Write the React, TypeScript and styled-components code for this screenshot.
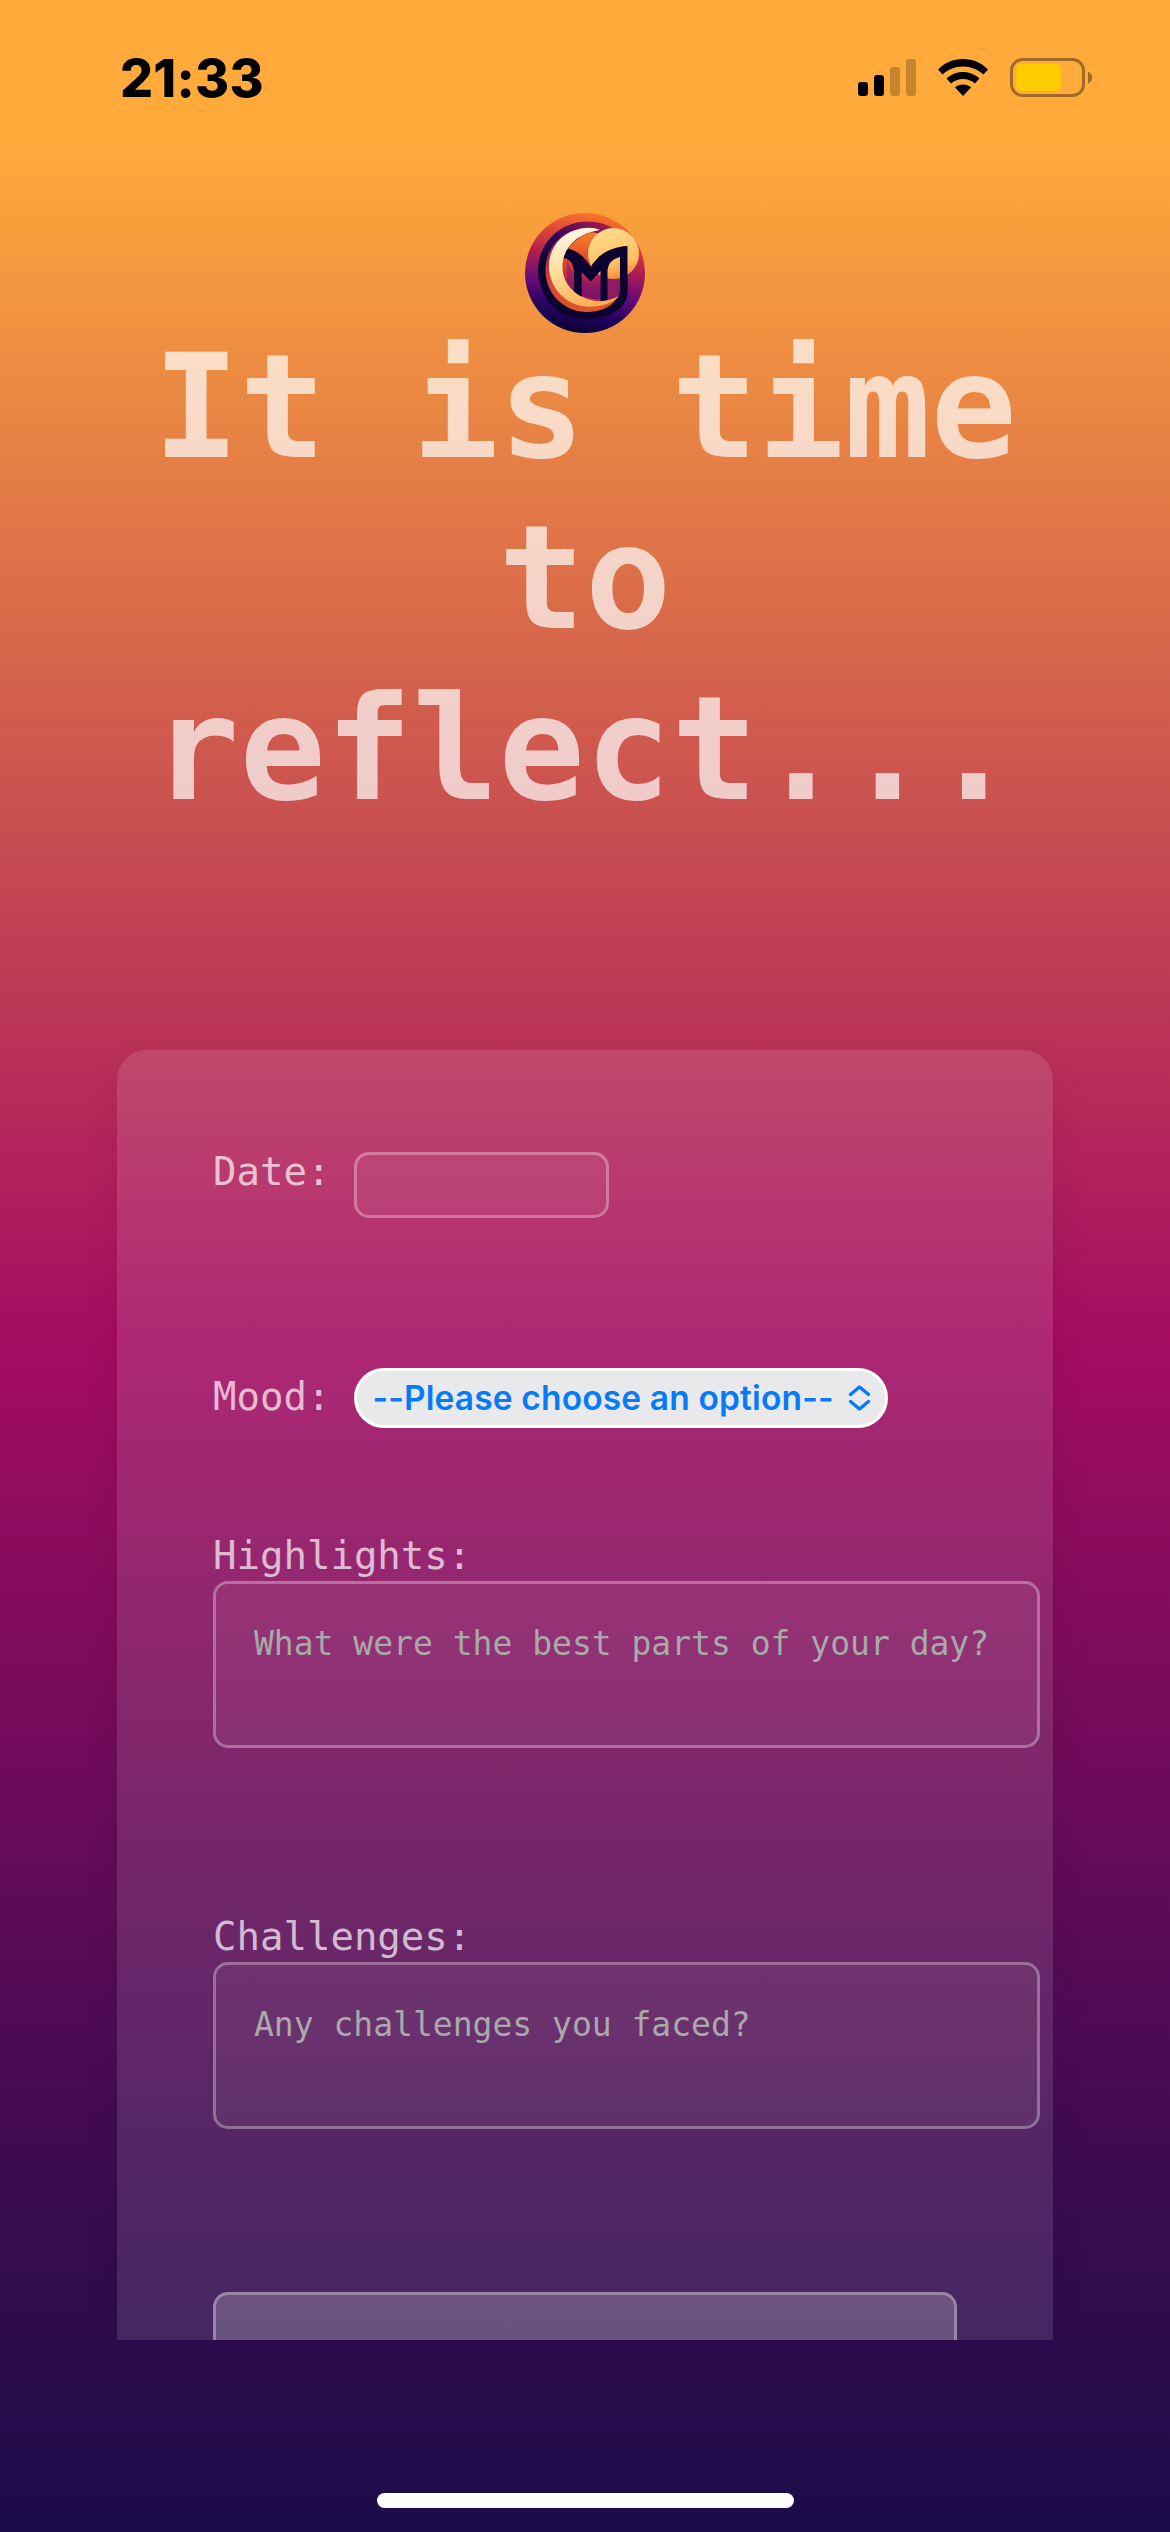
import React from 'react';
import styled, { createGlobalStyle } from 'styled-components';

const mono = `'DejaVu Sans Mono', Menlo, monospace`;
const sans = `Inter, 'Liberation Sans', sans-serif`;

const GlobalStyle = createGlobalStyle`
  *, *::before, *::after { box-sizing: border-box; }
  html, body { margin: 0; padding: 0; }
`;

const Screen = styled.div`
  width: 1170px;
  height: 2532px;
  overflow: hidden;
  display: flex;
  flex-direction: column;
  font-family: ${mono};
  background: linear-gradient(
    180deg,
    #ffaa3b 0px, #ffaa3b 141px,
    #c94f50 818px, #a50c62 1336px, #400b51 2135px, #1b0c49 2532px
  );
`;

const StatusBar = styled.header`
  height: 141px;
  flex: none;
  display: flex;
  justify-content: space-between;
  padding: 48px 77px 0 120px;
`;

const Clock = styled.time`
  padding-top: 1px;
  font: 800 52px/60px ${sans};
  letter-spacing: 0.2px;
  color: #000;
`;

const StatusIcons = styled.div`
  display: flex;
  gap: 22px;
  height: 60px;
`;

const Page = styled.main`
  height: 2199px;
  flex: none;
  overflow: hidden;
  padding: 72px 117px 0;
  display: flex;
  flex-direction: column;
`;

const Logo = styled.svg`
  display: block;
  width: 120px;
  height: 120px;
  flex: none;
  align-self: center;
`;

const Title = styled.h1`
  margin: -11px 0 0;
  flex: none;
  height: 728px;
  font: 700 143.5px/171px ${mono};
  text-align: center;
  color: rgba(255, 255, 255, 0.7);
`;

const Card = styled.form`
  flex: none;
  height: 1500px;
  padding: 102px 0 0 96px;
  border-radius: 30px;
  background: rgba(255, 255, 255, 0.115);
  box-shadow: 0 12px 36px rgba(0, 0, 0, 0.08);
  display: flex;
  flex-direction: column;
  align-items: flex-start;
`;

const Row = styled.div<{ $height: number; $labelShift: number }>`
  display: flex;
  align-items: flex-start;
  height: ${(p) => p.$height}px;
  gap: 24px;

  & > label {
    margin-top: ${(p) => p.$labelShift}px;
  }
`;

const Label = styled.label`
  font: 400 39px/46px ${mono};
  color: rgba(255, 255, 255, 0.7);
`;

const DateField = styled.div`
  width: 255px;
  height: 66px;
  border: 3px solid rgba(255, 255, 255, 0.3);
  border-radius: 15px;
  background: rgba(255, 255, 255, 0.05);
`;

const Select = styled.div`
  width: 534px;
  height: 60px;
  padding: 0 14px 0 15px;
  display: flex;
  align-items: center;
  justify-content: space-between;
  border: 3px solid #fff;
  border-radius: 30px;
  background: #e9e9eb;
  color: #067bf8;
  font: 600 33.5px/54px ${sans};
  letter-spacing: 0.15px;
  white-space: nowrap;
`;

const Field = styled.div<{ $height: number }>`
  display: flex;
  flex-direction: column;
  gap: 2px;
  height: ${(p) => p.$height}px;
`;

const TextArea = styled.div`
  width: 827px;
  height: 167px;
  padding: 40px 36px 0 38px;
  border: 3px solid rgba(255, 255, 255, 0.3);
  border-radius: 15px;
  background: rgba(255, 255, 255, 0.05);
  color: #a9a9a9;
  font: 400 33px/39px ${mono};
  white-space: nowrap;
`;

const SubmitButton = styled.div`
  width: 744px;
  height: 120px;
  border: 3px solid rgba(255, 255, 255, 0.3);
  border-radius: 15px;
  background: rgba(255, 255, 255, 0.2);
`;

const HomeArea = styled.footer`
  flex: 1;
  display: flex;
  justify-content: center;
  align-items: flex-end;
  padding-bottom: 24px;
`;

const HomeIndicator = styled.div`
  width: 417px;
  height: 15px;
  border-radius: 8px;
  background: #fff;
`;

const SignalIcon = () => (
  <svg width="58" height="60" viewBox="0 0 58 60">
    <rect x="0" y="34" width="10" height="14" rx="3" />
    <rect x="16" y="27" width="10" height="21" rx="3" />
    <rect x="32" y="19" width="10" height="29" rx="3" opacity=".22" />
    <rect x="48" y="11" width="10" height="37" rx="3" opacity=".22" />
  </svg>
);

const WifiIcon = () => (
  <svg width="50" height="60" viewBox="0 0 50 60">
    <path d="M25 11C35 11 43.500 15 50 21.500L45.500 26.500C40 21.500 33 18.500 25 18.500S10 21.500 4.500 26.500L0 21.500C6.500 15 15 11 25 11Z" />
    <path d="M25 24C31.500 24 37 26.500 41.500 30.500L37 35.500C33.500 32.500 29.500 31 25 31S16.500 32.500 13 35.500L8.500 30.500C13 26.500 18.500 24 25 24Z" />
    <path d="M25 36.500C28.500 36.500 31 37.800 33 39.500L25 48L17 39.500C19 37.800 21.500 36.500 25 36.500Z" />
  </svg>
);

const BatteryIcon = () => (
  <svg width="83" height="60" viewBox="0 0 83 60">
    <rect x="1.500" y="11.500" width="72" height="36" rx="11" fill="none" stroke="#9f6a26" strokeWidth="3" />
    <rect x="6" y="16" width="45" height="27" rx="5" fill="#ffcc00" />
    <path d="M78 23.500C81 25 82.200 27 82.200 29.500S81 34 78 35.500Z" fill="#9f6a26" />
  </svg>
);

const BrandMark = () => (
  <Logo viewBox="0 0 120 120">
    <defs>
      <linearGradient id="disc" x1=".65" y1="0" x2=".45" y2="1">
        <stop offset="0" stopColor="#fb7a26" />
        <stop offset=".2" stopColor="#e04a35" />
        <stop offset=".42" stopColor="#b01d4e" />
        <stop offset=".66" stopColor="#620a7a" />
        <stop offset=".84" stopColor="#22015c" />
        <stop offset="1" stopColor="#0d0138" />
      </linearGradient>
      <linearGradient id="core" x1=".5" y1="0" x2=".55" y2="1">
        <stop offset="0" stopColor="#fb7f24" />
        <stop offset=".45" stopColor="#d84336" />
        <stop offset=".7" stopColor="#a01d5a" />
        <stop offset="1" stopColor="#620a7a" />
      </linearGradient>
      <linearGradient id="ring" x1=".7" y1="0" x2=".4" y2=".6">
        <stop offset="0" stopColor="#a31b4f" />
        <stop offset=".5" stopColor="#3b0558" />
        <stop offset="1" stopColor="#0b0230" />
      </linearGradient>
      <linearGradient id="shade" x1="0" y1="0" x2=".4" y2="1">
        <stop offset="0" stopColor="#5b0b72" />
        <stop offset=".5" stopColor="#ce4330" />
        <stop offset="1" stopColor="#e0562f" />
      </linearGradient>
      <linearGradient id="moon" x1=".4" y1="0" x2=".6" y2="1">
        <stop offset="0" stopColor="#fff8e4" />
        <stop offset=".5" stopColor="#ffdc9a" />
        <stop offset="1" stopColor="#ffad50" />
      </linearGradient>
      <linearGradient id="sun" x1=".4" y1="0" x2=".7" y2="1">
        <stop offset="0" stopColor="#ffdb8e" />
        <stop offset=".7" stopColor="#ffbd5f" />
        <stop offset="1" stopColor="#ef8436" />
      </linearGradient>
    </defs>
    <circle cx="60" cy="60" r="60" fill="url(#disc)" />
    <path d="M92 18C74 5 50 6 33 18C17 30 10 49 14 68C19 90 37 106 60 106C82 106 102.500 96 102.500 79V40Z" fill="url(#ring)" />
    <circle cx="64" cy="54" r="35" fill="url(#core)" />
    <path d="M75 17C46 10 20 28 20.500 58C21 82 40 99 62 99C74 99 84 95 90 88L94 83C66 93 38 80 38 54C38 37 50 22 75 17Z" fill="url(#shade)" />
    <path d="M42 44C44 58 54 72 78 74V88H54L42 72Z" fill="#8b1762" opacity=".55" />
    <path d="M82 66H96V82L82 89Z" fill="#8f1c63" />
    <circle cx="88.500" cy="40.500" r="25.500" fill="url(#sun)" />
    <path d="M41 35C52 37 60 44 65.700 54C74 40 87 34 102.500 33V79C102.500 86 99 91 94 94L88 91L94 82C94.700 80 95 78 95 76V44C87 46 82.500 51 82.500 59V90H75.500V58L65.700 68.500L56.700 59V86L49 80V58C48 50 45 46 38 45Z" fill="#0b0230" />
    <path d="M75 17C70 14.500 63 14 56 15.500C37 19 24 34 24 53C24 76 42 93.700 65 93.700C77 93.700 88 90 94 83C85 88 75 89.500 66 87C49 83 37.500 70 37.500 54C37.500 36 50 21 75 17Z" fill="url(#moon)" />
  </Logo>
);

const ChevronUpDown = () => (
  <svg width="23" height="28" viewBox="0 0 23 28" fill="none" stroke="currentColor" strokeWidth="3.500" strokeLinecap="round" strokeLinejoin="round">
    <path d="M2.500 10.500L11.500 3L20.500 10.500M2.500 17.500L11.500 25L20.500 17.500" />
  </svg>
);

export default function App() {
  return (
    <>
      <GlobalStyle />
      <Screen>
        <StatusBar>
          <Clock>21:33</Clock>
          <StatusIcons>
            <SignalIcon />
            <WifiIcon />
            <BatteryIcon />
          </StatusIcons>
        </StatusBar>
        <Page>
          <BrandMark />
          <Title>It is time<br />to<br />reflect...</Title>
          <Card>
            <Row $height={216} $labelShift={-3}>
              <Label>Date:</Label>
              <DateField />
            </Row>
            <Row $height={165} $labelShift={6}>
              <Label>Mood:</Label>
              <Select>
                --Please choose an option--
                <ChevronUpDown />
              </Select>
            </Row>
            <Field $height={381}>
              <Label>Highlights:</Label>
              <TextArea>What were the best parts of your day?</TextArea>
            </Field>
            <Field $height={378}>
              <Label>Challenges:</Label>
              <TextArea>Any challenges you faced?</TextArea>
            </Field>
            <SubmitButton />
          </Card>
        </Page>
        <HomeArea>
          <HomeIndicator />
        </HomeArea>
      </Screen>
    </>
  );
}
